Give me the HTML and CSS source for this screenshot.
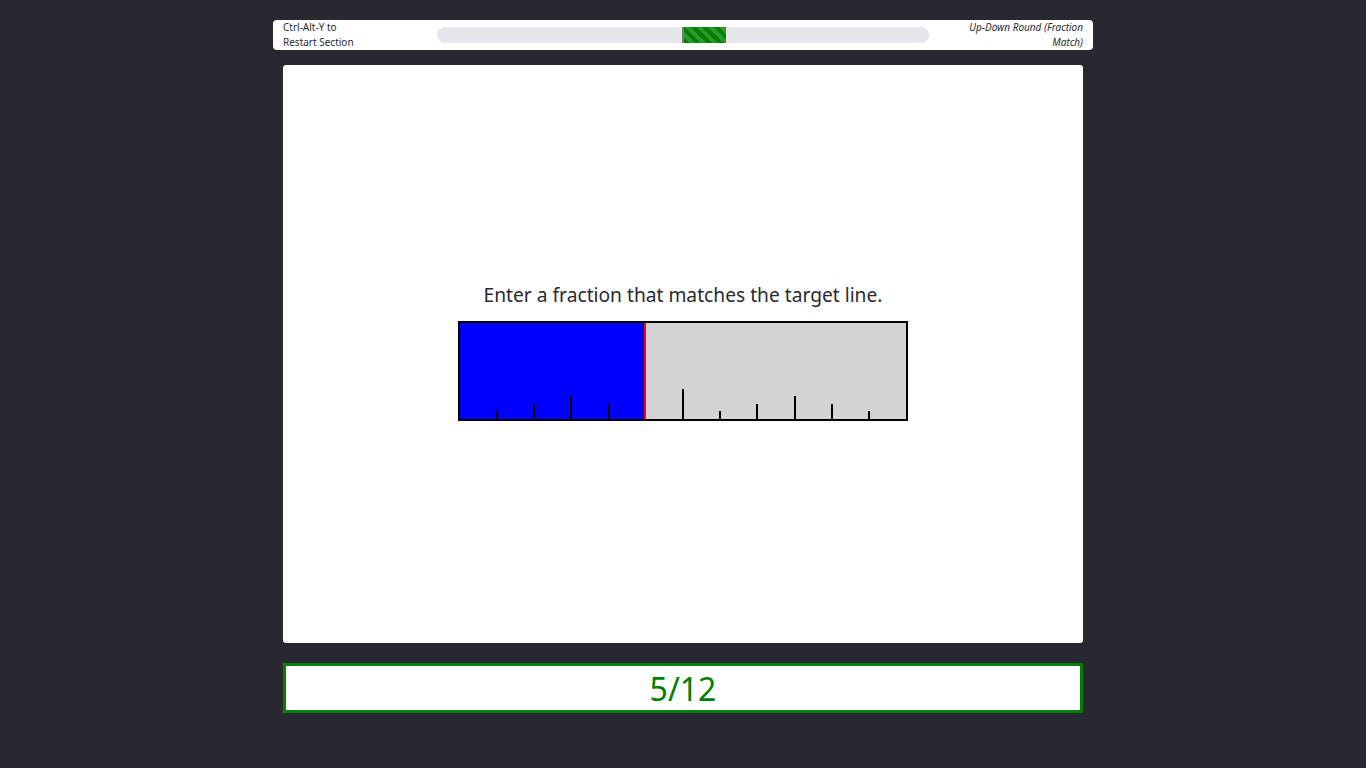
FILE: index.html
```html
<!DOCTYPE html>
<html>
<head>
<meta charset="utf-8">
<link rel="stylesheet" href="styles.css">
</head>
<body>
<div class="page">
  <header class="topbar">
    <div class="hint">Ctrl-Alt-Y to<br>Restart Section</div>
    <div class="progress">
      <div class="progress-gap" style="width:245px"></div>
      <div class="progress-edge"></div>
      <div class="progress-fill" style="width:42px"></div>
    </div>
    <div class="round">Up-Down Round (Fraction<br>Match)</div>
  </header>
  <main class="card">
    <p class="prompt">Enter a fraction that matches the target line.</p>
    <div class="bar">
      <div class="bar-fill" style="width:184px"></div>
      <div class="bar-target" style="left:184px"></div>
      <div class="tick t1" style="left:36px"></div>
      <div class="tick t2" style="left:73px"></div>
      <div class="tick t3" style="left:110px"></div>
      <div class="tick t2" style="left:148px"></div>
      <div class="tick t6" style="left:222px"></div>
      <div class="tick t1" style="left:259px"></div>
      <div class="tick t2" style="left:296px"></div>
      <div class="tick t3" style="left:334px"></div>
      <div class="tick t2" style="left:371px"></div>
      <div class="tick t1" style="left:408px"></div>
    </div>
  </main>
  <div class="answer">5/12</div>
</div>
</body>
</html>
```
FILE: styles.css
```css
html, body {
  margin: 0;
  padding: 0;
}
body {
  background: #292830;
  font-family: "Noto Sans", "Open Sans", sans-serif;
  color: #2a2a33;
}
.page {
  width: 820px;
  margin: 0 auto;
  padding-top: 20px;
  display: flex;
  flex-direction: column;
  align-items: center;
}
.topbar {
  box-sizing: border-box;
  width: 820px;
  height: 30px;
  background: #fff;
  border-radius: 4px;
  padding: 0 10px;
  display: grid;
  grid-template-columns: 134px 492px 134px;
  column-gap: 20px;
  align-items: center;
  font-size: 10px;
  line-height: 15px;
}
.hint {
  white-space: nowrap;
}
.round {
  text-align: right;
  font-style: italic;
  white-space: nowrap;
}
.progress {
  height: 16px;
  background: #e5e7eb;
  border-radius: 8px;
  display: flex;
  overflow: hidden;
}
.progress-edge {
  width: 2px;
  background: #7a7a7a;
}
.progress-fill {
  background: repeating-linear-gradient(45deg, #008000 0 4px, #2a982a 4px 8px);
}
.card {
  box-sizing: border-box;
  width: 800px;
  height: 578px;
  margin-top: 15px;
  background: #fff;
  border-radius: 3px;
  display: flex;
  flex-direction: column;
  align-items: center;
  justify-content: center;
  padding-bottom: 6px;
}
.prompt {
  margin: 0 0 12px;
  font-size: 19.2px;
  line-height: 28px;
}
.bar {
  position: relative;
  width: 446px;
  height: 96px;
  border: 2px solid #000;
  background: #d3d3d3;
}
.bar-fill {
  position: absolute;
  left: 0;
  top: 0;
  bottom: 0;
  background: #0000ff;
}
.bar-target {
  position: absolute;
  top: 0;
  bottom: 0;
  width: 2px;
  background: #ff0000;
}
.tick {
  position: absolute;
  bottom: 0;
  width: 2px;
  background: #000;
}
.t1 { height: 8px; }
.t2 { height: 15px; }
.t3 { height: 23px; }
.t6 { height: 30px; }
.answer {
  box-sizing: border-box;
  width: 800px;
  height: 50px;
  margin-top: 20px;
  background: #fff;
  border: 3px solid #008000;
  color: #008000;
  font-size: 32px;
  line-height: 46px;
  text-align: center;
}
```
